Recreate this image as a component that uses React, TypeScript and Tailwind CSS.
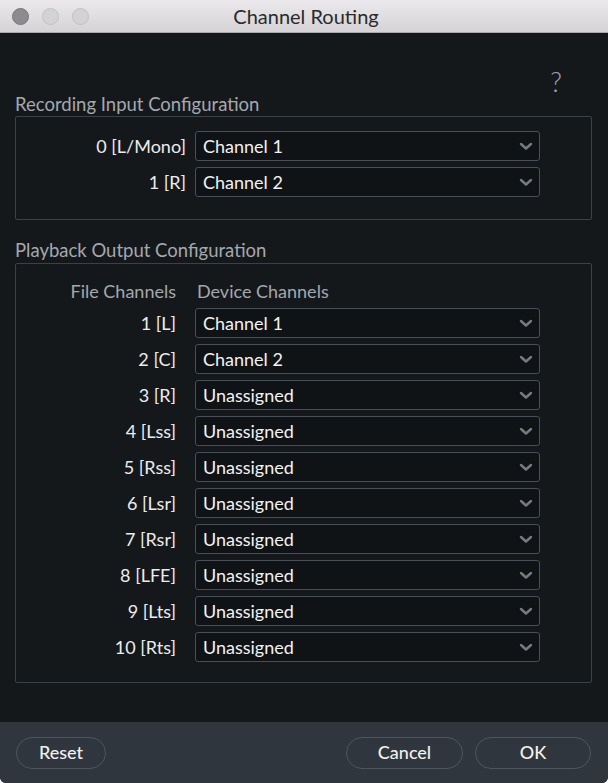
const inputs = [
  { label: '0 [L/Mono]', value: 'Channel 1' },
  { label: '1 [R]', value: 'Channel 2' },
];

const outputs = [
  { label: '1 [L]', value: 'Channel 1' },
  { label: '2 [C]', value: 'Channel 2' },
  { label: '3 [R]', value: 'Unassigned' },
  { label: '4 [Lss]', value: 'Unassigned' },
  { label: '5 [Rss]', value: 'Unassigned' },
  { label: '6 [Lsr]', value: 'Unassigned' },
  { label: '7 [Rsr]', value: 'Unassigned' },
  { label: '8 [LFE]', value: 'Unassigned' },
  { label: '9 [Lts]', value: 'Unassigned' },
  { label: '10 [Rts]', value: 'Unassigned' },
];

function Chevron() {
  return (
    <svg width="14" height="9" viewBox="0 0 14 9" fill="none">
      <path d="M2 2l5 4.5L12 2" stroke="#747b82" strokeWidth="2.4" strokeLinecap="round" strokeLinejoin="round" />
    </svg>
  );
}

function Select({ value }: { value: string }) {
  return (
    <div className="flex h-[30px] w-[345px] items-center justify-between rounded-[3px] border border-[#484f56] bg-[#101316] pl-[7px] pr-[6px]">
      <span className="text-[18px] text-[#f2f2f2]">{value}</span>
      <Chevron />
    </div>
  );
}

function Light({ dark }: { dark?: boolean }) {
  return (
    <div
      className={
        dark
          ? 'h-[17px] w-[17px] rounded-full border border-[#77767a] bg-[#8c8b8f]'
          : 'h-[17px] w-[17px] rounded-full border border-[#c2c1c3] bg-[#d3d2d4]'
      }
    />
  );
}

function Button({ children, width }: { children: string; width: string }) {
  return (
    <button className={`${width} h-[32px] rounded-full border border-[#4e565d] text-[18px] font-medium text-[#f0f0f0]`}>
      {children}
    </button>
  );
}

export default function App() {
  return (
    <div className="h-[783px] w-[608px] bg-white font-['Lato',sans-serif]">
      <div className="flex h-full flex-col overflow-hidden rounded-b-[6px] bg-[#15181b]">
        {/* Title bar */}
        <div className="relative flex h-[33px] shrink-0 items-center border-b border-[#a9a8aa] bg-gradient-to-b from-[#ebe9eb] to-[#d5d3d5]">
          <div className="flex gap-[13px] pl-[12px]">
            <Light dark />
            <Light />
            <Light />
          </div>
          <div className="absolute inset-0 flex items-center justify-center pl-[4px] text-[20px] text-[#2a2a2a]">Channel Routing</div>
        </div>

        {/* Body */}
        <div className="flex-1 px-[15px] pr-[16px]">
          <div className="flex h-[62px] items-end justify-end pr-[30px] text-[27px] font-light leading-none text-[#a0a6ab]">?</div>

          <div className="mt-[-1px] text-[18.5px] leading-[20px] text-[#a3a9ae]">Recording Input Configuration</div>
          <div className="mt-[2px] rounded-[2px] border border-[#3b4148] pb-[22px] pt-[14px]">
            <div className="flex flex-col gap-[6px]">
              {inputs.map((r) => (
                <div key={r.label} className="flex items-center">
                  <div className="w-[179px] pr-[9px] text-right text-[18px] text-[#ececec]">{r.label}</div>
                  <Select value={r.value} />
                </div>
              ))}
            </div>
          </div>

          <div className="mt-[20px] text-[18.5px] leading-[20px] text-[#a3a9ae]">Playback Output Configuration</div>
          <div className="mt-[3px] rounded-[2px] border border-[#3b4148] pb-[20px] pt-[16px]">
            <div className="flex items-center text-[18px] leading-[22px] text-[#a3a9ae]">
              <div className="w-[179px] pr-[19px] text-right">File Channels</div>
              <div className="pl-[2px]">Device Channels</div>
            </div>
            <div className="mt-[6px] flex flex-col gap-[6px]">
              {outputs.map((r) => (
                <div key={r.label} className="flex items-center">
                  <div className="w-[179px] pr-[19px] text-right text-[18px] text-[#ececec]">{r.label}</div>
                  <Select value={r.value} />
                </div>
              ))}
            </div>
          </div>
        </div>

        {/* Footer */}
        <div className="flex h-[61px] shrink-0 items-center justify-between bg-[#2f363d] pl-[16px] pr-[17px]">
          <Button width="w-[90px]">Reset</Button>
          <div className="flex gap-[12px]">
            <Button width="w-[117px]">Cancel</Button>
            <Button width="w-[116px]">OK</Button>
          </div>
        </div>
      </div>
    </div>
  );
}
